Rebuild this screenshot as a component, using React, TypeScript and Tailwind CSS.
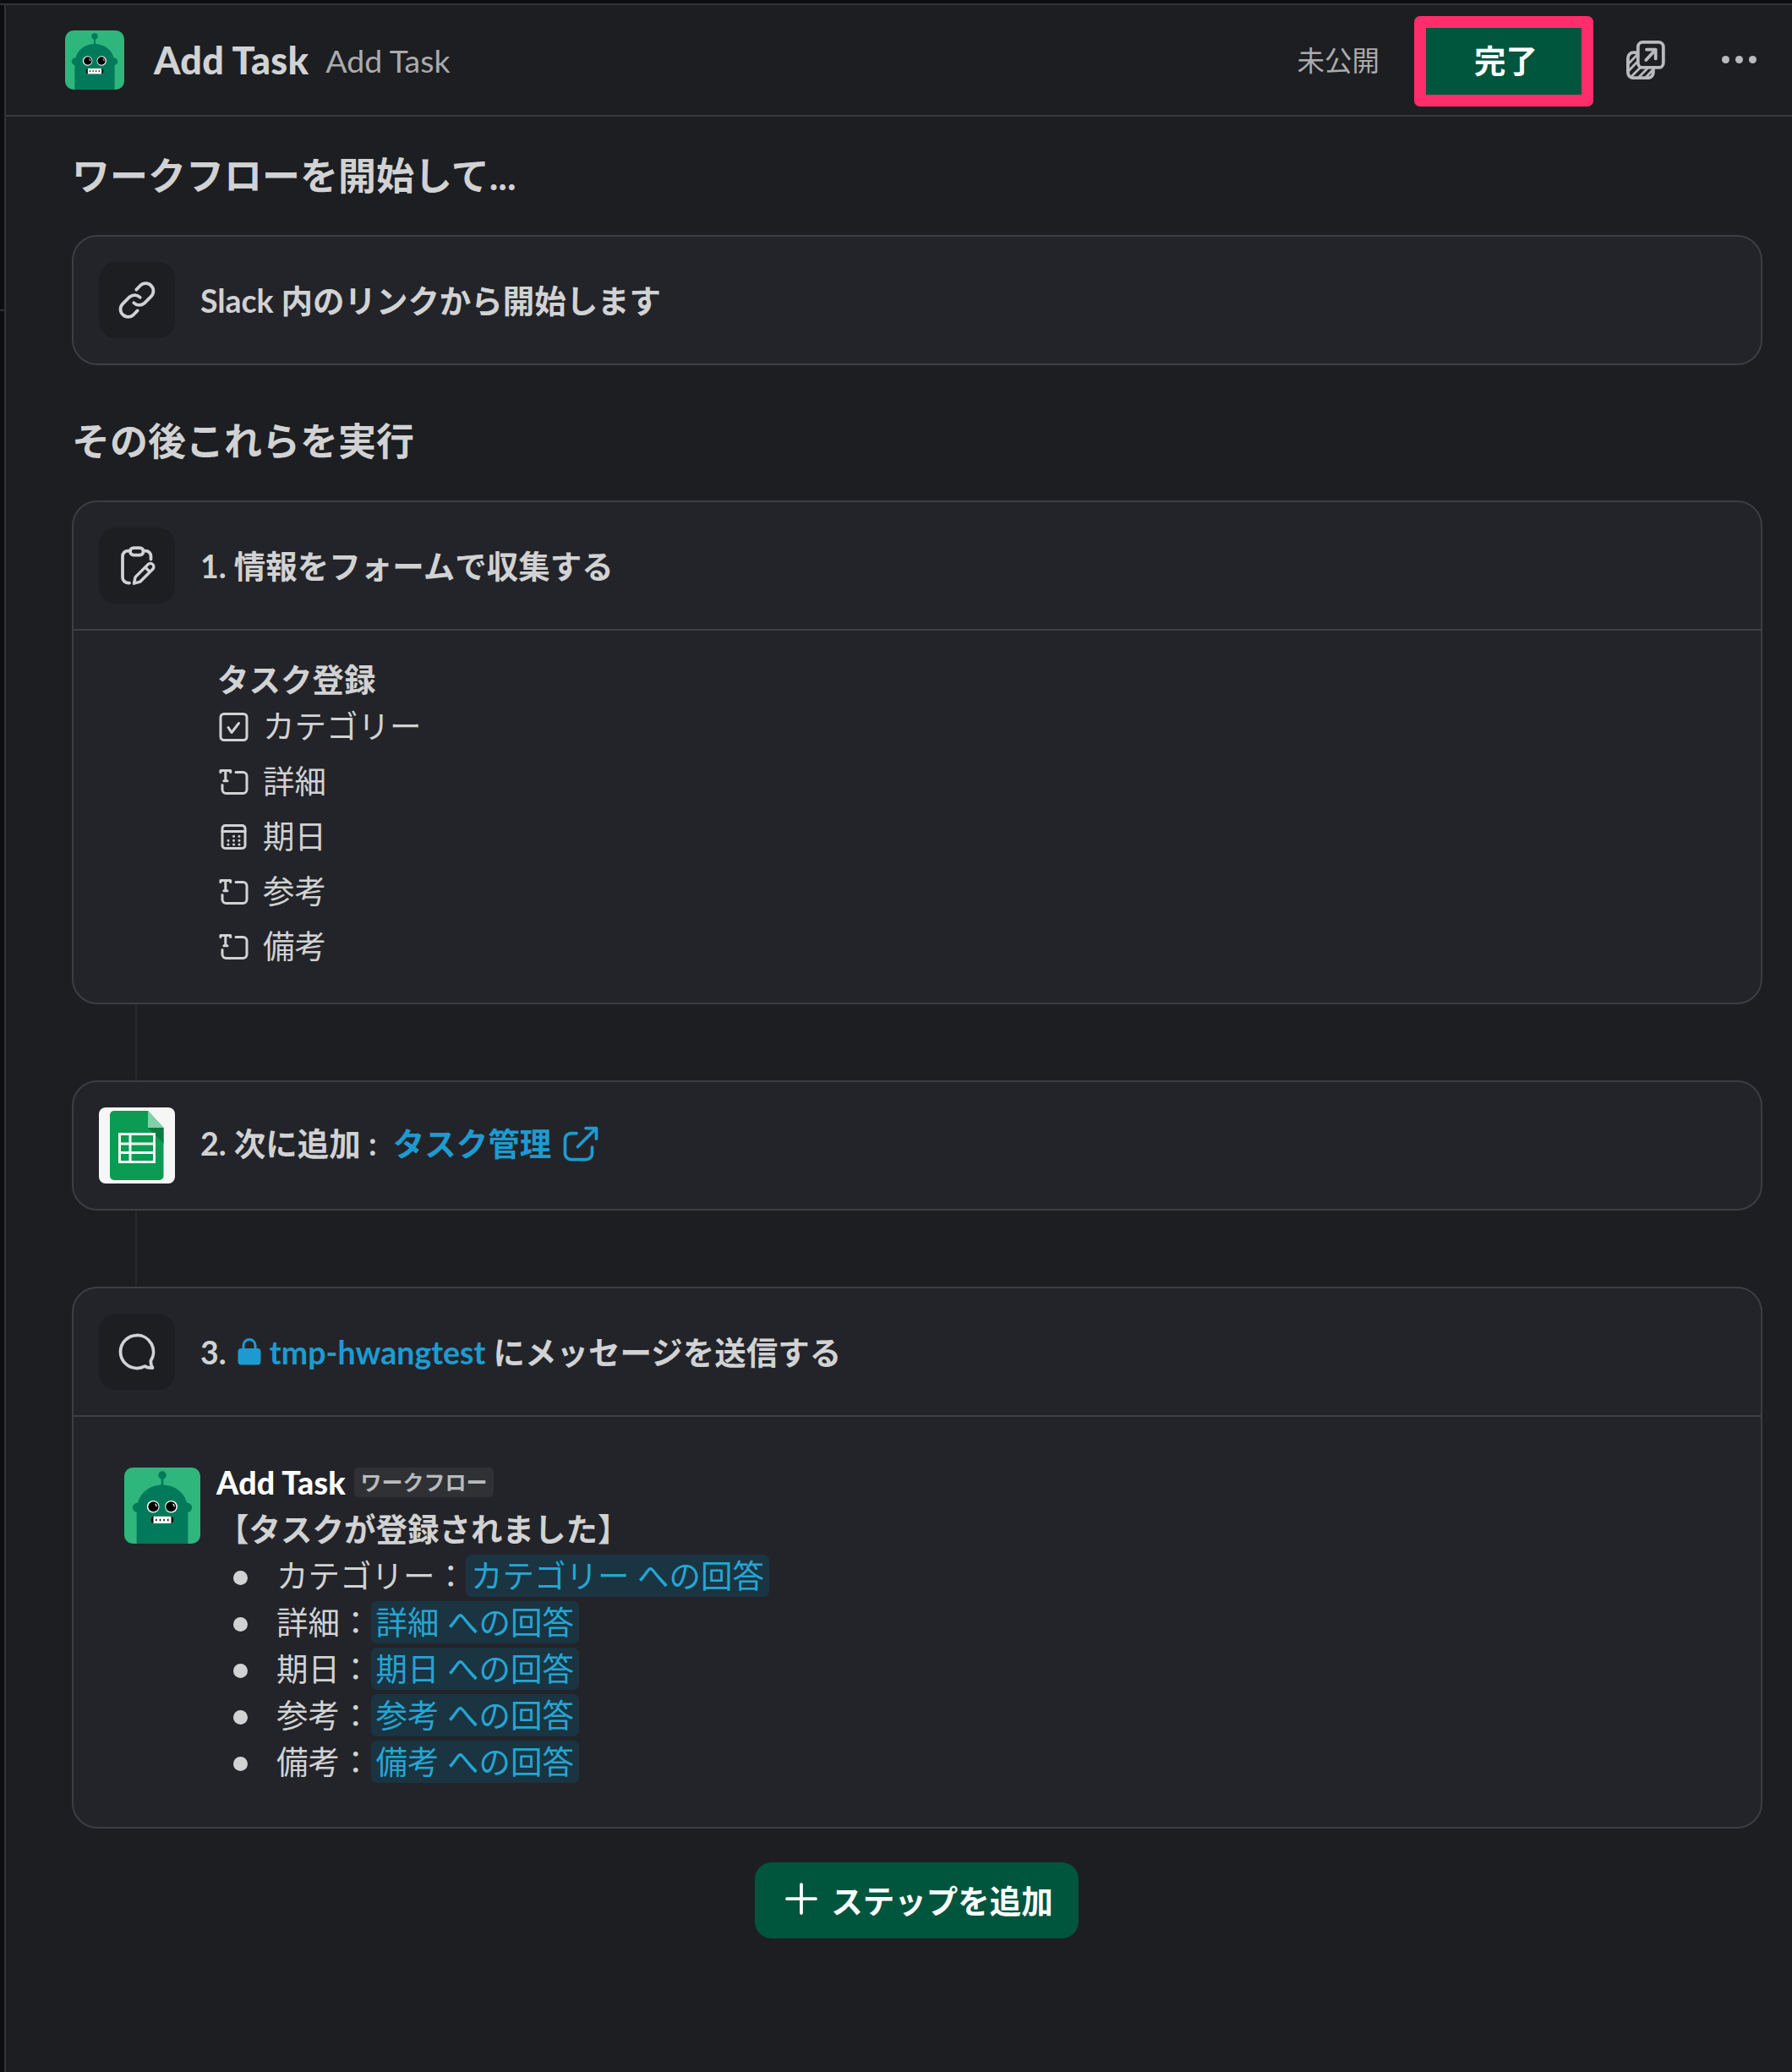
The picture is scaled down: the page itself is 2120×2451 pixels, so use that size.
import type { ReactNode } from "react";

function Robot({ className }: { className: string }) {
  return (
    <svg viewBox="0 0 70 70" className={className}>
      <rect width="70" height="70" fill="#2fb67c" />
      <g fill="#007a5a">
        <circle cx="35" cy="7" r="3.7" />
        <rect x="34" y="9" width="2" height="8" />
        <circle cx="12" cy="36.8" r="4.3" />
        <circle cx="58" cy="36.8" r="4.3" />
        <path d="M11.4 70V40C11.4 25 22 16 35 16s23.6 9 23.6 24v30z" />
      </g>
      <circle cx="26.6" cy="36" r="5.7" fill="#fff" />
      <circle cx="43.2" cy="36" r="5.7" fill="#fff" />
      <circle cx="26.8" cy="36" r="4.7" fill="#000" />
      <circle cx="43" cy="36" r="4.7" fill="#000" />
      <path d="M28.4 33.4q1.4 1 1.2 2.6M44.8 33.4q1.4 1 1.2 2.6" stroke="#fff" strokeWidth="1" fill="none" />
      <rect x="24.7" y="45" width="20.6" height="6.2" rx="3" fill="#000" />
      <rect x="26.8" y="45" width="16.4" height="6.4" rx="0.6" fill="#fff" />
      <path d="M28.900 48.200h13" stroke="#000" strokeWidth="1.800" strokeDasharray="1.100 2.500" />
    </svg>
  );
}

const strokeProps = {
  fill: "none",
  stroke: "currentColor",
  strokeLinecap: "round",
  strokeLinejoin: "round",
} as const;

function PopOutIcon() {
  return (
    <svg viewBox="0 0 46 46" className="size-[46px]" {...strokeProps} strokeWidth="3.8">
      <rect x="13.8" y="1.9" width="30" height="30" rx="5.5" />
      <path d="M12.5 14.2H8.4a6.5 6.5 0 0 0-6.5 6.5v17a6.5 6.5 0 0 0 6.5 6.5h17a6.5 6.5 0 0 0 6.5-6.500v-4" />
      <path d="M24 10.700h10.700v10.700M34.400 11 23.300 23" />
      <path d="M3 27 12.500 17M3 35.500 13 25M6.500 42 16 32.500M15 43l9.500-9.500M23.500 43l7-7.500" strokeWidth="2.800" />
    </svg>
  );
}

function LinkIcon() {
  return (
    <svg viewBox="0 0 50 50" className="size-[50px]" {...strokeProps} strokeWidth="3.75">
      <path d="M24.300 12.600 29 7.800a9 9 0 0 1 12.800 12.800l-8.200 8.200a9 9 0 0 1-12.300-.6" />
      <path d="M25.700 37.400 21 42.200a9 9 0 0 1-12.800-12.800l8.200-8.200a9 9 0 0 1 12.300.6" />
    </svg>
  );
}

function FormIcon() {
  return (
    <svg viewBox="0 0 50 50" className="size-[50px]" {...strokeProps} strokeWidth="3.75">
      <rect x="17" y="4" width="15.500" height="8.500" rx="4" />
      <path d="M17 7.500h-2.500A6.500 6.500 0 0 0 8 14v25a6.500 6.500 0 0 0 6.500 6.500h1.500M32.500 7.500H35A6.500 6.500 0 0 1 41.500 14v3.500" />
      <path d="M21.500 46.200l1.600-7.600 15-15a3.900 3.900 0 0 1 5.600 5.600l-15 15zM34.800 27l5.600 5.600" strokeWidth="3.400" />
    </svg>
  );
}

function MessageIcon() {
  return (
    <svg viewBox="0 0 50 50" className="size-[50px]" {...strokeProps} strokeWidth="3.75">
      <path d="M25 5.500a19.500 19.500 0 1 0 0 39c3.400 0 6.600-.9 9.300-2.400 2 1.400 5.200 2.200 9.200 2-1.500-2.300-2.300-5.300-2.200-8.300A19.500 19.500 0 0 0 25 5.500z" />
    </svg>
  );
}

function SheetsIcon() {
  return (
    <svg viewBox="0 0 90 90" className="size-[90px] rounded-[8px]">
      <rect width="90" height="90" fill="#f6f6f6" />
      <path d="M18 4h40l18.500 20v57a5 5 0 0 1-5 5H18a5 5 0 0 1-5-5V9a5 5 0 0 1 5-5z" fill="#0b9b52" />
      <path d="M58 24h18.500v18.500z" fill="#087b41" />
      <path d="M58 4l18.500 20H58z" fill="#82cfa8" />
      <path fillRule="evenodd" fill="#f3faf6" d="M23 30h44v36H23zM26 33v8.500h9.500V33zM38.500 33v8.500H64V33zM26 44.500v7.500h9.500v-7.500zM38.500 44.500v7.500H64v-7.500zM26 55v8h9.500v-8zM38.500 55v8H64v-8z" />
    </svg>
  );
}

function ExternalIcon() {
  return (
    <svg viewBox="0 0 42 42" className="size-[42px]" {...strokeProps} strokeWidth="3.75">
      <path d="M16 8.500H9.500a7 7 0 0 0-7 7v17a7 7 0 0 0 7 7h18a7 7 0 0 0 7-7V25M27 2.500h12.500V15M39 3 17.500 24.500" />
    </svg>
  );
}

function LockIcon() {
  return (
    <svg viewBox="0 0 28 32" className="h-[32px] w-[28px]">
      <path d="M7 14V8.500a7 7 0 0 1 14 0V14" fill="none" stroke="currentColor" strokeWidth="3" />
      <rect x="0.500" y="12" width="27" height="19.500" rx="4" fill="currentColor" />
    </svg>
  );
}

function CheckField() {
  return (
    <svg viewBox="0 0 36 36" className="size-[36px]" {...strokeProps} strokeWidth="3">
      <rect x="2" y="2.500" width="31" height="31" rx="4" />
      <path d="M11 18.500l4 6 8.500-11" />
    </svg>
  );
}

function TextField() {
  return (
    <svg viewBox="0 0 36 36" className="size-[36px]" {...strokeProps} strokeWidth="3">
      <path d="M20 6.500h8.500a4.500 4.500 0 0 1 4.500 4.500v16a4.500 4.500 0 0 1-4.500 4.500h-20A4.500 4.500 0 0 1 4 27v-5.500" />
      <path d="M1.900 6.600V4.500h11.800v2.100M7.800 5v11.700M5.800 16.700h4.200" />
    </svg>
  );
}

function DateField() {
  return (
    <svg viewBox="0 0 36 36" className="size-[36px]" {...strokeProps} strokeWidth="3">
      <rect x="4" y="4.500" width="27" height="27" rx="3.500" />
      <path d="M4 11.500h27" />
      <path d="M17.500 17.300h.01M24 17.300h.01M11 22.300h.01M17.500 22.300h.01M24 22.300h.01M11 27h.01M17.500 27h.01M24 27h.01" />
    </svg>
  );
}

function IconBox({ children }: { children: ReactNode }) {
  return <div className="flex size-[90px] shrink-0 items-center justify-center rounded-[20px] bg-[#1d1e21]">{children}</div>;
}

function StepHeader({ icon, children }: { icon: ReactNode; children: ReactNode }) {
  return (
    <div className="flex h-[150px] items-center gap-[30px] px-[30px] font-bold">
      {icon}
      <div className="flex items-center whitespace-pre">{children}</div>
    </div>
  );
}

const card = "rounded-[30px] border-2 border-[#3d3e42] bg-[#232429]";

const fields = [
  { label: "カテゴリー", icon: <CheckField /> },
  { label: "詳細", icon: <TextField /> },
  { label: "期日", icon: <DateField /> },
  { label: "参考", icon: <TextField /> },
  { label: "備考", icon: <TextField /> },
];

function Connector() {
  return <div className="ml-[75px] h-[90px] w-[2px] bg-[#27282c]" />;
}

export default function App() {
  return (
    <div lang="ja" className="flex h-[2451px] w-[2120px] flex-col overflow-hidden bg-[#0c0d0e] pt-[4px] font-['Lato','Noto_Sans_CJK_JP',sans-serif] text-[37.5px] leading-[55px] text-[#d1d2d3]">
      <div className="flex min-h-0 flex-1 border-t-2 border-[#323336]">
        <div className="w-[5px] shrink-0">
          <div className="h-[362px] border-b-2 border-[#323336]" />
        </div>
        <div className="flex min-w-0 flex-1 flex-col border-l-2 border-[#323336] bg-[#1d1e21]">
          <header className="flex h-[132px] shrink-0 items-center border-b-2 border-[#38393d] pl-[70px]">
            <Robot className="size-[70px] rounded-[10px]" />
            <h1 className="ml-[35px] text-[45px] font-black tracking-[0.2px]">Add Task</h1>
            <p className="ml-[20px] text-[#ababad]">Add Task</p>
            <div className="ml-auto flex items-center text-[#b9babd]">
              <span className="text-[32.5px] text-[#ababad]">未公開</span>
              <button className="mt-[2px] ml-[41px] flex h-[107px] w-[212px] items-center justify-center rounded-[7px] bg-[#ff2d6b]">
                <span className="flex h-[79px] w-[184px] items-center justify-center bg-[#00553d] pb-[2px] pl-[5px] font-bold text-white">完了</span>
              </button>
              <div className="ml-[39px]">
                <PopOutIcon />
              </div>
              <div className="mr-[42px] mb-px ml-[67px] flex gap-[7px]">
                <i className="size-[9px] rounded-full bg-current" />
                <i className="size-[9px] rounded-full bg-current" />
                <i className="size-[9px] rounded-full bg-current" />
              </div>
            </div>
          </header>

          <main className="flex flex-col pr-[35px] pl-[78px]">
            <h2 className="mt-[40px] mb-[40px] h-[60px] text-[45px] leading-[60px] font-bold">ワークフローを開始して...</h2>
            <section className={card}>
              <StepHeader icon={<IconBox><LinkIcon /></IconBox>}>
                <span className="tracking-[-0.05px]">Slack 内のリンクから開始します</span>
              </StepHeader>
            </section>

            <h2 className="mt-[60px] mb-[40px] h-[60px] text-[45px] leading-[60px] font-bold">その後これらを実行</h2>
            <section className={card}>
              <StepHeader icon={<IconBox><FormIcon /></IconBox>}>1. 情報をフォームで収集する</StepHeader>
              <div className="h-[442px] border-t-2 border-[#3d3e42] pt-[30px] pl-[170px]">
                <h3 className="font-bold">タスク登録</h3>
                <ul className="-mt-[4px] pl-[2px]">
                  {fields.map((f) => (
                    <li key={f.label} className="flex h-[65px] items-center gap-[16px]">
                      {f.icon}
                      <span className="pb-[3px]">{f.label}</span>
                    </li>
                  ))}
                </ul>
              </div>
            </section>
            <Connector />

            <section className={card}>
              <StepHeader icon={<SheetsIcon />}>
                <span className="mb-[6px]">2. 次に追加 :{"  "}</span>
                <a className="mb-[4px] ml-px flex items-center gap-[14px] text-[#1d9bd1]">
                  <span className="mb-[2px]">タスク管理</span>
                  <ExternalIcon />
                </a>
              </StepHeader>
            </section>
            <Connector />

            <section className={card}>
              <StepHeader icon={<IconBox><MessageIcon /></IconBox>}>
                3.{" "}
                <a className="mr-[9px] ml-[4px] flex items-center gap-[10px] text-[#1d9bd1]">
                  <LockIcon />
                  tmp-hwangtest
                </a>{" "}
                にメッセージを送信する
              </StepHeader>
              <div className="flex h-[487px] gap-[19px] border-t-2 border-[#3d3e42] pt-[60px] pl-[60px]">
                <Robot className="size-[90px] shrink-0 rounded-[10px]" />
                <div>
                  <div className="-mt-[9px] flex h-[54px] items-start gap-[10px]">
                    <span className="-mt-px font-black tracking-[0.2px] text-white">Add Task</span>
                    <span className="mt-[9px] h-[35px] rounded-[5px] bg-[#303135] px-[7.500px] text-[25px] leading-[34px] font-bold text-[#b9babd]">ワークフロー</span>
                  </div>
                  <p className="pl-px font-bold">【タスクが登録されました】</p>
                  <ul>
                    {fields.map((f) => (
                      <li key={f.label} className="flex h-[55px] items-center">
                        <i className="mt-[5px] mr-[34px] ml-[20px] size-[17px] rounded-full bg-current" />
                        <span>{f.label}：</span>
                        <span className="-ml-px h-[50px] rounded-[7px] bg-[#1a3442] px-[6px] leading-[50px] whitespace-pre text-[#26a5d2]">{f.label} への回答</span>
                      </li>
                    ))}
                  </ul>
                </div>
              </div>
            </section>

            <button className="mt-[40px] mr-[2px] flex h-[90px] w-[383px] items-center justify-center gap-[16px] self-center rounded-[20px] bg-[#00553d] pl-[7px] font-bold text-white">
              <svg viewBox="0 0 38 38" className="mb-[5px] size-[38px]" {...strokeProps} strokeWidth="3.750">
                <path d="M19 2v34M2 19h34" />
              </svg>
              ステップを追加
            </button>
          </main>
        </div>
      </div>
    </div>
  );
}
